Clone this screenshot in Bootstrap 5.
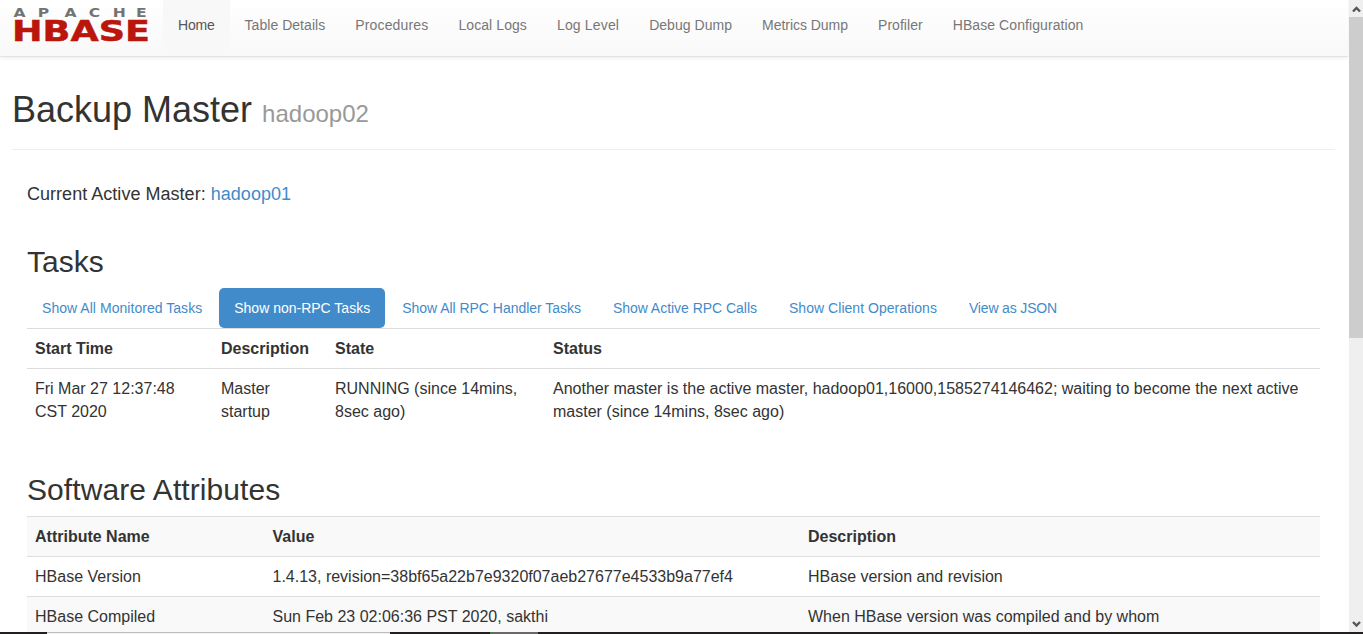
<!DOCTYPE html>
<html lang="en">
<head>
<meta charset="utf-8">
<title>Master: hadoop02</title>
<link rel="stylesheet" href="https://cdn.jsdelivr.net/npm/bootstrap@5.3.0/dist/css/bootstrap.min.css">
<style>
  html, body { height: 100%; overflow: hidden; }
  body { font-family: "Liberation Sans", Arial, sans-serif; font-size: 16px; line-height: 23px; color: #333; background: #fff; }
  a { color: #428bca; text-decoration: none; }
  .page { height: 632px; }
  .view { min-width: 0; }
  .topbar { height: 57px; margin-right: 1px; background: linear-gradient(#fff, #f8f8f8); border-bottom: 1px solid #e3e3e3; box-shadow: 0 1px 5px rgba(0,0,0,.08); }
  .topbar .nav-link { font-size: 14px; line-height: 20px; padding: 15px; color: #777; height: 50px; }
  .topbar .nav-link.active { color: #555; background: #f8f8f8; height: 50px; letter-spacing: -.2px; }
  .topbar .nav-link:nth-child(n+2) { letter-spacing: .04px; }
  .topbar .nav-link:nth-child(3), .topbar .nav-link:nth-child(5) { letter-spacing: .16px; }
  .topbar .nav-link:nth-child(4), .topbar .nav-link:nth-child(9) { letter-spacing: .08px; }
  .topbar .nav-link:nth-child(7) { letter-spacing: -.03px; }
  .logo-box { width: 163px; }
  .content-area { padding: 0 14px 0 12px; }
  h1 { font-size: 36px; line-height: 39.6px; margin: 33px 0 0; padding-bottom: 20px; border-bottom: 1px solid #eee; height: 60px; }
  h1 span { font-size: 24px; color: #999; }
  .inner { padding: 0 15px; }
  .current-master { font-size: 18px; line-height: 20px; margin: 34px 0 0; letter-spacing: .03px; }
  h2 { font-size: 30px; line-height: 33px; margin: 0; }
  .task-title { margin: 41px 0 10px; }
  .attr-title { margin: 42px 0 10px; letter-spacing: .08px; }
  .task-tabs { gap: 2px; }
  .task-tabs .nav-link { font-size: 14px; line-height: 20px; padding: 10px 15px; border-radius: 5px; color: #428bca; }
  .task-tabs .nav-link:first-child { letter-spacing: .04px; }
  .task-tabs .nav-link:nth-child(4), .task-tabs .nav-link:nth-child(3) { letter-spacing: -.03px; }
  .task-tabs .nav-link:nth-child(5) { letter-spacing: .04px; }
  .task-tabs .nav-link:last-child { letter-spacing: -.16px; }
  .task-tabs .nav-link.active { background: #428bca; color: #fff; }
  .grid { table-layout: fixed; margin: 0; color: #333; }
  .grid > tbody > tr > * { padding: 8px; border: 0; border-top: 1px solid #ddd; color: #333; box-shadow: none; background: none; }
  .grid.zebra > tbody > tr:nth-child(odd) > * { background: #f9f9f9; }
  .scroll-rail { width: 14px; background: #efefef; }
  .scroll-thumb { height: 321px; background: #cdcdcd; }
  .taskbar { height: 2px; background: #231f20; }
  .taskbar .lit { width: 343px; margin-left: 47px; background: #f4f4f4; border-top: 1px solid #bcbcbc; }
  .taskbar .green { width: 3px; margin-left: 100px; background: #4b7d4b; }
  .taskbar .dim { width: 45px; background: #6c6869; }
</style>
</head>
<body>
<div class="page d-flex overflow-hidden">
  <div class="view flex-grow-1">
    <nav class="topbar d-flex">
      <a class="logo-box flex-shrink-0" href="#">
        <svg class="d-block" width="163" height="56" font-family="DejaVu Sans, sans-serif" font-weight="bold">
          <text y="17" transform="scale(1.3 1)" x="10.3 29 49.6 68.2 86.8 104.6" font-size="12" fill="#737373">APACHE</text>
          <text y="41" x="12" font-size="29" fill="#ba160c" stroke="#ba160c" stroke-width=".5" textLength="138" lengthAdjust="spacingAndGlyphs">HBASE</text>
        </svg>
      </a>
      <div class="nav flex-nowrap">
        <a class="nav-link active" href="#">Home</a>
        <a class="nav-link" href="#">Table Details</a>
        <a class="nav-link" href="#">Procedures</a>
        <a class="nav-link" href="#">Local Logs</a>
        <a class="nav-link" href="#">Log Level</a>
        <a class="nav-link" href="#">Debug Dump</a>
        <a class="nav-link" href="#">Metrics Dump</a>
        <a class="nav-link" href="#">Profiler</a>
        <a class="nav-link" href="#">HBase Configuration</a>
      </div>
    </nav>
    <main class="content-area">
      <h1 class="fw-normal">Backup Master <span>hadoop02</span></h1>
      <div class="inner">
        <p class="current-master">Current Active Master: <a href="#">hadoop01</a></p>
        <h2 class="task-title fw-normal">Tasks</h2>
        <div class="nav nav-pills task-tabs">
          <a class="nav-link" href="#">Show All Monitored Tasks</a>
          <a class="nav-link active" href="#">Show non-RPC Tasks</a>
          <a class="nav-link" href="#">Show All RPC Handler Tasks</a>
          <a class="nav-link" href="#">Show Active RPC Calls</a>
          <a class="nav-link" href="#">Show Client Operations</a>
          <a class="nav-link" href="#">View as JSON</a>
        </div>
        <table class="table grid">
          <colgroup><col style="width:186px"><col style="width:114px"><col style="width:218px"><col></colgroup>
          <tbody>
            <tr><th>Start Time</th><th>Description</th><th>State</th><th>Status</th></tr>
            <tr><td>Fri Mar 27 12:37:48 CST 2020</td><td>Master startup</td><td>RUNNING (since 14mins, 8sec ago)</td><td>Another master is the active master, hadoop01,16000,1585274146462; waiting to become the next active master (since 14mins, 8sec ago)</td></tr>
          </tbody>
        </table>
        <h2 class="attr-title fw-normal">Software Attributes</h2>
        <table class="table grid zebra">
          <colgroup><col style="width:237.5px"><col style="width:535.5px"><col></colgroup>
          <tbody>
            <tr><th>Attribute Name</th><th>Value</th><th>Description</th></tr>
            <tr><td>HBase Version</td><td>1.4.13, revision=38bf65a22b7e9320f07aeb27677e4533b9a77ef4</td><td>HBase version and revision</td></tr>
            <tr><td>HBase Compiled</td><td>Sun Feb 23 02:06:36 PST 2020, sakthi</td><td>When HBase version was compiled and by whom</td></tr>
          </tbody>
        </table>
      </div>
    </main>
  </div>
  <div class="scroll-rail d-flex flex-column flex-shrink-0">
    <svg class="d-block flex-shrink-0" width="14" height="17"><path d="M4 11.5 7.5 8 11 11.5" fill="none" stroke="#555" stroke-width="2.4"/></svg>
    <div class="scroll-thumb"></div>
    <svg class="d-block mt-auto" width="14" height="17"><path d="M4 7 7.5 10.5 11 7" fill="none" stroke="#555" stroke-width="2.4"/></svg>
  </div>
</div>
<div class="taskbar d-flex"><div class="lit"></div><div class="green"></div><div class="dim"></div></div>
<script src="https://cdn.jsdelivr.net/npm/bootstrap@5.3.0/dist/js/bootstrap.bundle.min.js"></script>
</body>
</html>
